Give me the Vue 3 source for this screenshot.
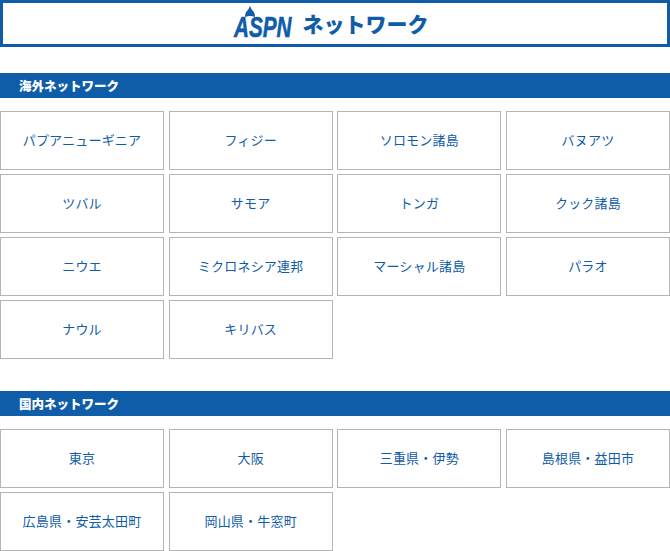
<script setup>
const overseas = [
  'パプアニューギニア', 'フィジー', 'ソロモン諸島', 'バヌアツ',
  'ツバル', 'サモア', 'トンガ', 'クック諸島',
  'ニウエ', 'ミクロネシア連邦', 'マーシャル諸島', 'パラオ',
  'ナウル', 'キリバス'
]
const domestic = [
  '東京', '大阪', '三重県・伊勢', '島根県・益田市',
  '広島県・安芸太田町', '岡山県・牛窓町'
]
</script>

<template>
  <div class="page">
    <header class="title">
      <div class="logo">
        <svg class="drop" viewBox="0 0 12 12" width="12" height="12">
          <path d="M6 0 L8 4 Q11 6 11 11 Q6 9 1 11 Q1 6 4 4 Z" fill="#0f5ca8" />
        </svg>
        <span class="logo-text">ASPN</span>
      </div>
      <h1>ネットワーク</h1>
    </header>

    <h2 class="bar bar-first">海外ネットワーク</h2>
    <div class="grid">
      <a v-for="name in overseas" :key="name" class="card">{{ name }}</a>
    </div>

    <h2 class="bar bar-second">国内ネットワーク</h2>
    <div class="grid">
      <a v-for="name in domestic" :key="name" class="card">{{ name }}</a>
    </div>
  </div>
</template>

<style scoped>
.page {
  width: 670px;
  font-family: "Noto Sans CJK JP", "Liberation Sans", sans-serif;
}

.title {
  box-sizing: border-box;
  height: 47px;
  padding-right: 8px;
  border: 3px solid #0f5ca8;
  display: flex;
  align-items: center;
  justify-content: center;
  gap: 10px;
  color: #0f5ca8;
}

.logo {
  position: relative;
  width: 59px;
  height: 34px;
  margin-top: -1px;
}

.drop {
  position: absolute;
  left: 10px;
  top: 0;
}

.logo-text {
  position: absolute;
  left: 0;
  bottom: 0;
  font-family: "Liberation Sans", sans-serif;
  font-size: 30px;
  line-height: 26px;
  font-weight: 700;
  font-style: italic;
  -webkit-text-stroke: 0.6px #0f5ca8;
  transform: scaleX(0.69);
  transform-origin: left bottom;
}

.title h1 {
  margin: -2px 0 0;
  font-size: 21px;
  line-height: 30px;
  font-weight: 900;
}

.bar {
  margin: 0 0 13px;
  height: 25px;
  padding-left: 19px;
  background: #0f5ca8;
  color: #fff;
  font-size: 12.5px;
  line-height: 25px;
  font-weight: 900;
}

.bar-first {
  margin-top: 26px;
}

.bar-second {
  margin-top: 32px;
}

.grid {
  display: grid;
  grid-template-columns: repeat(4, 164px);
  column-gap: 4.67px;
  row-gap: 4px;
}

.card {
  box-sizing: border-box;
  height: 59px;
  padding-bottom: 2px;
  border: 1px solid #b4b4b4;
  display: flex;
  align-items: center;
  justify-content: center;
  color: #0f5ca8;
  font-size: 13px;
  letter-spacing: 0.2px;
}
</style>
